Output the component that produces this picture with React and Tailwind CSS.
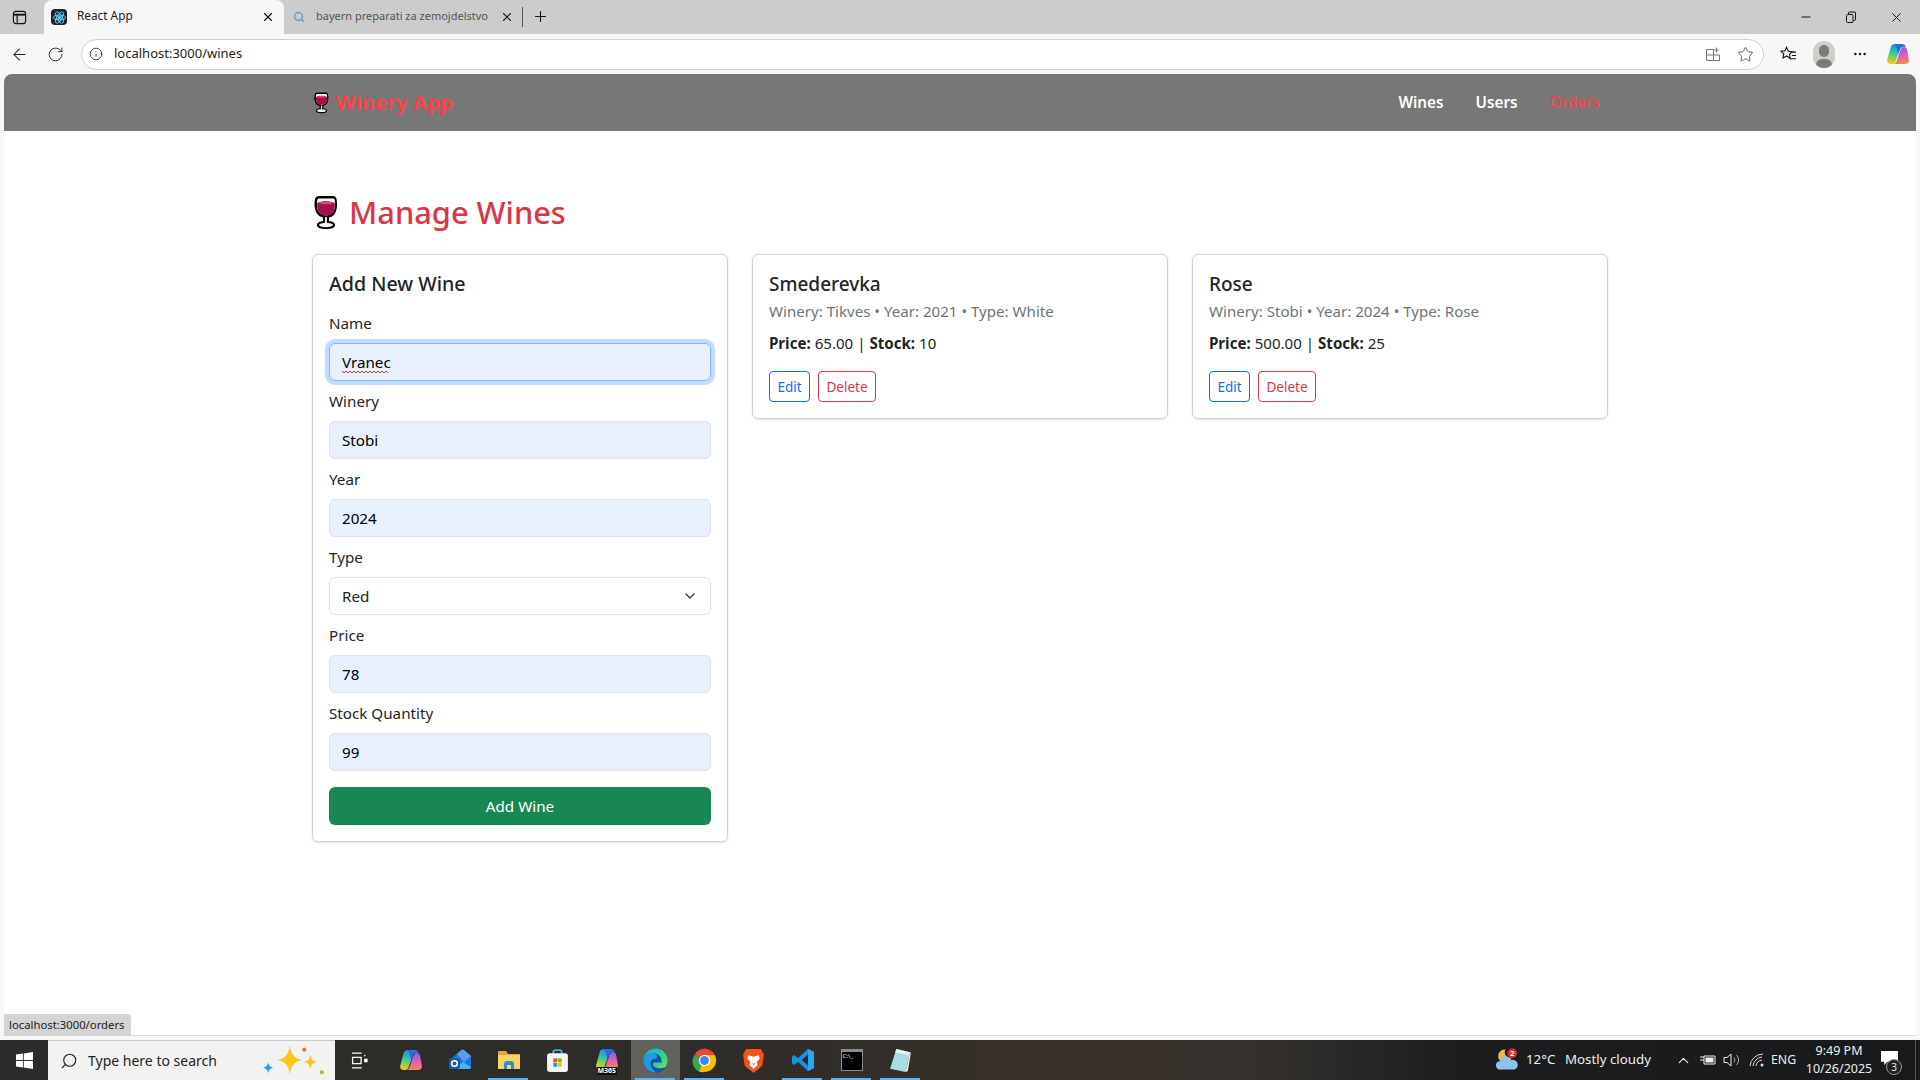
import React from 'react';
import { ArrowLeft, RotateCw, Info, X, Plus, Minus, Star, Search, MoreHorizontal, ChevronUp, ChevronDown } from 'lucide-react';

const font = { fontFamily: '"Noto Sans", sans-serif' };

function WineGlass({ className }) {
  return (
    <svg viewBox="0 0 24 36" className={className}>
      <path d="M5 2h14c2 0 3 1 3.500 3 1.500 8 0 17-7.500 18.500V27c3 .3 6 1.500 6 4 0 3-4 4-9 4s-9-1-9-4c0-2.500 3-3.700 6-4v-3.500C1 22 -.5 13 1 5c.5-2 2-3 4-3z" fill="#000" />
      <path d="M5 4.500h14c1 0 1.500.5 1.700 1.500 1 7 .3 15-8.700 15.500C3 21 2.300 13 3.300 6c.2-1 .7-1.500 1.700-1.500z" fill="#fff" />
      <path d="M3.200 9c4-2.500 13.500-2.500 17.600 0 .5 6-1 12.500-8.800 12.500S2.700 15 3.200 9z" fill="#a60f4f" />
      <path d="M4 9c4-2 12-2 16 0-4 1.800-12 1.800-16 0z" fill="#e8406f" />
      <path d="M11 23h2v6h-2z" fill="#dcdcdc" />
      <ellipse cx="12" cy="31" rx="7" ry="2.200" fill="#f2f2f2" />
    </svg>
  );
}

function Field({ label, value, squiggle }) {
  return (
    <div className="mb-2">
      <label className="block mb-2 text-[15.200px] leading-6 text-[#212529]">{label}</label>
      <div className="relative">
        <input
          readOnly
          value={value}
          spellCheck={false}
          className={`block w-full h-[38px] px-3 rounded-md bg-[#e8f0fe] text-[15.200px] text-black outline-none border ${squiggle ? 'border-[#86b7fe] ring-4 ring-[#0d6efd]/25' : 'border-[#dee2e6]'}`}
        />
        {squiggle && (
          <svg className="absolute left-[13px] top-[27px] w-[48px] h-[4px]" viewBox="0 0 48 4">
            <path d="M0 1l2 2 2-2 2 2 2-2 2 2 2-2 2 2 2-2 2 2 2-2 2 2 2-2 2 2 2-2 2 2 2-2 2 2 2-2 2 2 2-2 2 2 2-2 2 2" fill="none" stroke="#e53935" strokeWidth="1" />
          </svg>
        )}
      </div>
    </div>
  );
}

function WineCard({ name, meta, price, stock }) {
  return (
    <div className="bg-white border border-[#d4d4d4] rounded-md shadow-sm p-4 self-start">
      <h5 className="text-[19px] leading-[26px] font-medium text-[#212529] mb-[2px]">{name}</h5>
      <p className="text-[15.100px] leading-6 text-[#6c757d] mb-2">{meta}</p>
      <p className="text-[15.100px] leading-6 text-[#212529] mb-4">
        <strong className="font-bold">Price:</strong> {price} | <strong className="font-bold">Stock:</strong> {stock}
      </p>
      <div className="flex gap-2">
        <button className="w-[41px] h-[31px] pt-px border border-[#0d6efd] rounded text-[13.500px] text-[#0d6efd]">Edit</button>
        <button className="w-[58px] h-[31px] pt-px border border-[#dc3545] rounded text-[13.500px] text-[#dc3545]">Delete</button>
      </div>
    </div>
  );
}

function TabBar() {
  return (
    <div className="h-[34px] bg-[#cccccc] flex items-center text-[12px] shrink-0">
      <div className="w-[44px] flex justify-center">
        <svg viewBox="0 0 16 16" className="w-[15px] h-[15px] ml-[-5px]" fill="none" stroke="#111" strokeWidth="1.200">
          <rect x="1.500" y="1.500" width="13" height="13" rx="2.500" />
          <path d="M1.500 5h13" strokeWidth="2" />
          <path d="M5.500 5v9.500" />
        </svg>
      </div>
      <div className="w-[240px] h-full bg-[#f7f7f7] rounded-t-lg flex items-center pl-[7px] pr-[9px]">
        <div className="w-[16px] h-[16px] rounded-sm bg-[#20232a] flex items-center justify-center">
          <svg viewBox="0 0 24 24" className="w-[15px] h-[15px]" fill="none" stroke="#61dafb" strokeWidth="1.500">
            <circle cx="12" cy="12" r="2" fill="#61dafb" />
            <ellipse cx="12" cy="12" rx="10" ry="4" />
            <ellipse cx="12" cy="12" rx="10" ry="4" transform="rotate(60 12 12)" />
            <ellipse cx="12" cy="12" rx="10" ry="4" transform="rotate(120 12 12)" />
          </svg>
        </div>
        <span className="ml-[10px] text-[#222] text-[11.800px] -mt-[2px]">React App</span>
        <X className="ml-auto w-[14px] h-[14px] text-[#111]" />
      </div>
      <div className="w-[238px] h-full flex items-center pl-[9px] pr-[8px]">
        <Search className="w-[12px] h-[12px] text-[#6d9bc4]" strokeWidth={3} />
        <span className="ml-[11px] w-[180px] whitespace-nowrap text-[#555] text-[11px] -mt-px">bayern preparati za zemojdelstvo</span>
        <X className="ml-auto w-[14px] h-[14px] text-[#222]" />
      </div>
      <div className="w-px h-[20px] bg-[#555]" />
      <Plus className="ml-[9px] w-[17px] h-[17px] text-[#111] -mt-[2px]" strokeWidth={1.500} />
      <div className="ml-auto flex items-center h-full mr-[1px]">
        <div className="w-[45px] flex justify-center"><Minus className="w-[14px] h-[14px] text-[#111]" /></div>
        <div className="w-[45px] flex justify-center">
          <svg viewBox="0 0 12 12" className="w-[12px] h-[12px]" fill="none" stroke="#111">
            <rect x="1.500" y="3.500" width="6.500" height="8" rx="1" />
            <path d="M3.500 3V2a1 1 0 0 1 1-1h5a1 1 0 0 1 1 1v6.500a1 1 0 0 1-1 1H8.500" />
          </svg>
        </div>
        <div className="w-[46px] flex justify-center"><X className="w-[15px] h-[15px] text-[#111]" strokeWidth={1.500} /></div>
      </div>
    </div>
  );
}

function Toolbar() {
  return (
    <div className="h-[40px] bg-[#f7f7f7] flex items-center shrink-0">
      <div className="w-[38px] flex justify-center"><ArrowLeft className="w-[19px] h-[19px] text-[#222]" strokeWidth={1.300} /></div>
      <div className="w-[35px] flex justify-center"><RotateCw className="w-[17px] h-[17px] text-[#222]" strokeWidth={1.300} /></div>
      <div className="ml-[8px] w-[1683px] h-[31px] bg-white border border-[#cfcfcf] rounded-full flex items-center pl-[8px] pr-[9px]">
        <Info className="w-[14px] h-[14px] text-[#333] -ml-px" strokeWidth={1.500} />
        <span className="ml-[11px] text-[13px] text-[#222]">localhost:3000/wines</span>
        <svg viewBox="0 0 16 16" className="ml-auto w-[16px] h-[16px]" fill="none" stroke="#777">
          <path d="M1.500 3.500h7v11h-7zM1.500 9h13v5.500h-6M11.500 1.500v5M9 4h5" />
        </svg>
        <Star className="ml-[16px] w-[17px] h-[17px] text-[#444]" strokeWidth={1.200} />
      </div>
      <svg viewBox="0 0 18 18" className="ml-[16px] w-[17px] h-[17px]" fill="none" stroke="#111" strokeWidth="1.200">
        <path d="M7 1.500l1.800 4 4.200.5-3 2.900.8 4.300L7 10.600l-3.800 2.100.8-4.300-3-2.900 4.200-.5zM12 6.500h5M12.500 10h4.500M11.500 13.500h5.500" />
      </svg>
      <div className="ml-[16px] w-[22px] h-[27px] rounded-full bg-[#cfcdc9] relative overflow-hidden">
        <div className="absolute left-[6px] top-[4px] w-[10px] h-[12px] rounded-full bg-[#7d7b78]" />
        <div className="absolute left-[3px] top-[18px] w-[16px] h-[12px] rounded-full bg-[#7d7b78]" />
      </div>
      <MoreHorizontal className="ml-[17px] w-[16px] h-[16px] text-[#222]" />
      <Copilot className="ml-[18px] w-[24px] h-[24px]" label="b" />
    </div>
  );
}

function Copilot({ className, label }) {
  return (
    <svg viewBox="0 0 24 24" className={className}>
      <defs>
        <linearGradient id={`cpa${label}`} x1="0.500" y1="0" x2="0.300" y2="1">
          <stop offset="0" stopColor="#1f8fe8" />
          <stop offset="0.450" stopColor="#38c6a0" />
          <stop offset="0.750" stopColor="#9bd23c" />
          <stop offset="1" stopColor="#f7c52e" />
        </linearGradient>
        <linearGradient id={`cpb${label}`} x1="0.500" y1="0" x2="0.600" y2="1">
          <stop offset="0" stopColor="#8a5be8" />
          <stop offset="0.500" stopColor="#e35bc0" />
          <stop offset="1" stopColor="#f78a4a" />
        </linearGradient>
      </defs>
      <path d="M8 2h8l-3 8-3.500 9.500A3.500 3.500 0 0 1 6 22H4.500C2 22 .6 20 1.300 17.600L4.700 5A4 4 0 0 1 8 2z" fill={`url(#cpa${label})`} />
      <path d="M16 22H8c1.500-.8 2.400-2 3-4l3-9c.8-2.300 2-4 4-4 1.600 0 2.700 1 3.200 3l1.600 9.600C23.400 20 22 22 19.500 22z" fill={`url(#cpb${label})`} />
      <path d="M8 2h8c2 0 3.300 1.200 3.800 3-3.500-.7-5.300.5-6.300 3.500L12 12c-.5-4-1-7-4-10z" fill="#1f6fe0" />
    </svg>
  );
}

function Cell({ children, active, bar }) {
  return (
    <div className={`relative w-[49px] h-full flex items-center justify-center ${active ? 'bg-white/25' : ''}`}>
      {children}
      {bar && <div className="absolute left-[4px] right-[5px] bottom-0 h-[2px] bg-[#5fb2ee]" />}
    </div>
  );
}

function Taskbar() {
  return (
    <div className="h-10 flex items-center text-white shrink-0 bg-[linear-gradient(90deg,#2b2b29_0%,#2d2c28_35%,#39302a_58%,#33302c_66%,#1c1d1f_76%,#18191b_100%)]" style={font}>
      <div className="w-[48px] flex justify-center">
        <svg viewBox="0 0 16 16" className="w-[17px] h-[17px]" fill="#fff">
          <path d="M0 2.300l6.500-.9v6.200H0zM7.300 1.300L16 0v7.600H7.300zM0 8.400h6.500v6.200L0 13.700zM7.300 8.400H16V16l-8.700-1.300z" />
        </svg>
      </div>
      <div className="w-[287px] h-full bg-[#f2f2f2] border-t border-[#c9c9c9] flex items-center pl-[12px] text-[#222] relative">
        <Search className="w-[18px] h-[18px] -scale-x-100 text-[#222]" strokeWidth={1.500} />
        <span className="ml-[10px] text-[14px]">Type here to search</span>
        <svg viewBox="0 0 64 34" className="absolute right-[7px] top-[2px] w-[66px] h-[36px]">
          <path d="M27 2c1.200 9 4.500 12.500 12 14-7.500 1.500-10.800 5-12 14-1.200-9-4.500-12.500-12-14 7.500-1.500 10.800-5 12-14z" fill="#f9c320" />
          <path d="M47 11c.6 4.500 2.200 6 6 7-3.800 1-5.400 2.500-6 7-.6-4.500-2.200-6-6-7 3.800-1 5.400-2.500 6-7z" fill="#f9c320" />
          <path d="M6 18c.5 3.500 1.800 4.700 5 5.500-3.200.8-4.500 2-5 5.500-.5-3.500-1.800-4.700-5-5.500 3.200-.8 4.500-2 5-5.500z" fill="#2d9be8" />
          <circle cx="41" cy="6" r="2" fill="#f0703a" />
          <circle cx="58" cy="28" r="2" fill="#8fc642" />
        </svg>
      </div>
      <div className="flex h-full ml-[2px]">
        <Cell>
          <svg viewBox="0 0 16 16" className="w-[17px] h-[17px] -ml-[4px]" fill="none" stroke="#fff" strokeWidth="1.200">
            <path d="M1 1h9M1 15h9M1.500 5h8v6h-8z" />
            <path d="M13 2.500v1.500M13 7h2v2h-2z" fill="#fff" />
          </svg>
        </Cell>
        <Cell><Copilot className="w-[24px] h-[24px]" label="t" /></Cell>
        <Cell>
          <svg viewBox="0 0 24 24" className="w-[24px] h-[24px]">
            <path d="M4 10l9-8a2 2 0 0 1 2.500 0L23 8v11a2 2 0 0 1-2 2H6z" fill="#1a78d6" />
            <path d="M9 6l4.500-4a2 2 0 0 1 2.500 0l7 6-7 6z" fill="#5a9df0" />
            <path d="M6 21l9-7 8 5a2 2 0 0 1-2 2z" fill="#4fb3ef" />
            <rect x="1" y="10" width="11" height="11" rx="2" fill="#0f5cb0" />
            <circle cx="6.500" cy="15.500" r="2.800" fill="none" stroke="#fff" strokeWidth="1.600" />
          </svg>
        </Cell>
        <Cell bar>
          <svg viewBox="0 0 24 24" className="w-[24px] h-[24px]">
            <path d="M1 3h8l2 3h12v15H1z" fill="#e0a93a" />
            <path d="M1 7h22v14H1z" fill="#f7d564" />
            <path d="M7 21v-5a3 3 0 0 1 3-3h4a3 3 0 0 1 3 3v5h-3v-4h-4v4z" fill="#2f8fd8" />
          </svg>
        </Cell>
        <Cell>
          <svg viewBox="0 0 24 24" className="w-[25px] h-[25px]">
            <path d="M8 7V4a2 2 0 0 1 2-2h4a2 2 0 0 1 2 2v3" fill="none" stroke="#39b2e8" strokeWidth="1.800" />
            <rect x="2" y="5" width="20" height="18" rx="2.500" fill="#f5f5f5" />
            <path d="M8 10h3.700v3.700H8z" fill="#f25022" />
            <path d="M12.300 10H16v3.700h-3.700z" fill="#7fba00" />
            <path d="M8 14.300h3.700V18H8z" fill="#00a4ef" />
            <path d="M12.300 14.300H16V18h-3.700z" fill="#ffb900" />
          </svg>
        </Cell>
        <Cell>
          <div className="relative w-[24px] h-[26px]">
            <Copilot className="w-[24px] h-[24px]" label="m" />
            <span className="absolute left-[2px] bottom-[-2px] bg-[#111] text-[7px] leading-[8px] px-px font-bold">M365</span>
          </div>
        </Cell>
        <Cell active bar>
          <svg viewBox="0 0 24 24" className="w-[25px] h-[25px]">
            <defs>
              <linearGradient id="edgeA" x1="0" y1="0" x2="1" y2="0.800">
                <stop offset="0" stopColor="#1fa4dc" />
                <stop offset="0.600" stopColor="#2fcf9a" />
                <stop offset="1" stopColor="#79dc5a" />
              </linearGradient>
            </defs>
            <circle cx="12" cy="12" r="11.500" fill="url(#edgeA)" />
            <path d="M1 13c0-6 5-8 9-8 5 0 8 3.500 8 9h-6.500c-2 0-2.500 2-1 3.500 3 2.500 8 2.500 12 .5-2 3.500-6 6-10.500 6C6 24 1 19 1 13z" fill="#0f56ab" />
            <path d="M1 13c-.3-6 5-9 9.500-8 2.800.6 4 3 2 5.500-3.500-.5-6 1.500-5 6 .6 2.500 2.500 5 5.500 7C6 24 1.300 19 1 13z" fill="#1e9be4" />
          </svg>
        </Cell>
        <Cell bar>
          <svg viewBox="0 0 24 24" className="w-[25px] h-[25px]">
            <path d="M12 12L2.500 6.500A11 11 0 0 1 22 7z" fill="#e8453c" />
            <path d="M12 12l-5 10.800A11 11 0 0 1 2.500 6.500z" fill="#34a853" />
            <path d="M12 7h10a11 11 0 0 1-10 16 11 11 0 0 1-5-.2z" fill="#fbbc05" />
            <circle cx="12" cy="12" r="5.500" fill="#fff" />
            <circle cx="12" cy="12" r="4.300" fill="#4285f4" />
          </svg>
        </Cell>
        <Cell>
          <svg viewBox="0 0 24 24" className="w-[25px] h-[25px]">
            <path d="M5 1h14l3 5-1.500 11L12 24l-8.500-7L2 6z" fill="#f4511e" />
            <path d="M7 7l5 1.500L17 7l1 3-3 3.500 1 3-4 3.500-4-3.500 1-3L6 10z" fill="#fff" />
            <path d="M10.500 14l1.500 1 1.500-1-1.500 3z" fill="#f4511e" />
          </svg>
        </Cell>
        <Cell bar>
          <svg viewBox="0 0 24 24" className="w-[24px] h-[24px]">
            <path d="M17 1l6 3v16l-6 3L7 14l-4 3-2-1.500V8.500L3 7l4 3z" fill="#1c8fdf" />
            <path d="M17 6.500L11 12l6 5.500z" fill="#24292e" />
            <path d="M17 1l6 3v16l-6 3z" fill="#2aa7f0" />
          </svg>
        </Cell>
        <Cell bar>
          <div className="w-[22px] h-[22px] bg-black border border-[#8a8a8a] border-t-[3px] flex items-start pl-px text-[6px] leading-[9px] text-white">C:\_</div>
        </Cell>
        <Cell bar>
          <svg viewBox="0 0 24 24" className="w-[25px] h-[25px]">
            <path d="M8 1l13 3-4 19-15-3z" fill="#a8dde4" />
            <path d="M8 1l13 3-1 3L7 4z" fill="#e6f2f4" />
            <path d="M17 23l4-19 1 .5L19 22z" fill="#f2f2f2" />
          </svg>
        </Cell>
      </div>
      <div className="ml-auto flex items-center h-full text-[#eee]">
        <svg viewBox="0 0 26 24" className="w-[25px] h-[24px] mr-[6px]">
          <path d="M11 1a7 7 0 1 0 6 9A6 6 0 0 1 11 1z" fill="#f5b93a" />
          <path d="M6 22a4.500 4.500 0 0 1-1-9 6.500 6.500 0 0 1 12-1 5 5 0 0 1 3 10z" fill="#8fc1ec" />
          <circle cx="18" cy="5" r="5" fill="#d32f2f" />
          <text x="18" y="8" textAnchor="middle" fontSize="8" fill="#fff" fontWeight="700">2</text>
        </svg>
        <span className="text-[13.300px] w-[39px]">12°C</span>
        <span className="text-[13.300px] w-[110px]">Mostly cloudy</span>
        <ChevronUp className="w-[17px] h-[17px]" strokeWidth={1.500} />
        <svg viewBox="0 0 18 12" className="ml-[7px] w-[18px] h-[12px]">
          <path d="M5 2h11v8H5z" fill="none" stroke="#eee" />
          <path d="M6.500 3.500h8v5h-8z" fill="#eee" />
          <path d="M1 3h4M1 6h4" stroke="#eee" />
        </svg>
        <svg viewBox="0 0 18 16" className="ml-[6px] w-[18px] h-[16px]" fill="none" stroke="#eee">
          <path d="M1 5.500h3L8 2v12l-4-3.500H1z" />
          <path d="M11 5.500a4 4 0 0 1 0 5M13.500 3a7 7 0 0 1 0 10" stroke="#aaa" />
        </svg>
        <svg viewBox="0 0 16 16" className="ml-[8px] w-[16px] h-[16px]" fill="none" stroke="#ddd">
          <path d="M1 14a13 13 0 0 1 13-12M4 14a10 10 0 0 1 9-9M7 14a7 7 0 0 1 6-6" />
          <circle cx="13" cy="13" r="1.500" fill="#ddd" stroke="none" />
        </svg>
        <span className="ml-[6px] text-[12.300px] w-[25px]">ENG</span>
        <div className="ml-[5px] w-[76px] flex flex-col items-center text-[12.500px] leading-[18px]">
          <span>9:49 PM</span>
          <span>10/26/2025</span>
        </div>
        <div className="relative w-[38px] h-full flex items-center justify-center">
          <svg viewBox="0 0 16 14" className="w-[17px] h-[15px] -mt-[4px] -ml-[14px]" fill="#fff">
            <path d="M0 0h16v10H6l-3 3v-3H0z" />
          </svg>
          <div className="absolute left-[9px] top-[19px] w-[16px] h-[16px] rounded-full border border-[#999] bg-[#222] text-[10px] leading-[14px] text-center">3</div>
        </div>
        <div className="w-px h-full bg-[#555] mr-[4px]" />
      </div>
    </div>
  );
}

export default function App() {
  return (
    <div className="h-screen flex flex-col overflow-hidden bg-white" style={font}>
      <TabBar />
      <Toolbar />
      <div className="relative flex-1 bg-[#f7f7f7] px-[4px]">
        <div className="h-[calc(100%-4px)] bg-white rounded-t-lg border-b border-[#dcdcdc] overflow-hidden">
          <nav className="h-[57px] bg-[#777777] flex items-center justify-center">
            <div className="w-[1296px] flex items-center">
              <WineGlass className="ml-[2px] w-[15px] h-[23px]" />
              <span className="ml-[7px] text-[20.400px] font-bold text-[#ff414a]">Winery App</span>
              <div className="ml-auto flex gap-[32px] text-[15.300px] mr-[8px]">
                <span className="font-semibold text-white">Wines</span>
                <span className="font-semibold text-white">Users</span>
                <span className="font-medium text-[#ff414a]">Orders</span>
              </div>
            </div>
          </nav>
          <main className="w-[1296px] mx-auto pt-[62px]">
            <h1 className="flex items-center text-[30.800px] leading-[38px] font-medium text-[#dc3545] mb-[23px]">
              <WineGlass className="ml-[2px] w-[24px] h-[36px]" />
              <span className="ml-[11px]">Manage Wines</span>
            </h1>
            <div className="grid grid-cols-3 gap-6 items-start">
              <div className="bg-white border border-[#d4d4d4] rounded-md shadow-sm p-4">
                <h5 className="text-[19.600px] leading-[26px] font-medium text-[#212529] mb-[14px]">Add New Wine</h5>
                <Field label="Name" value="Vranec" squiggle />
                <Field label="Winery" value="Stobi" />
                <Field label="Year" value="2024" />
                <div className="mb-2">
                  <label className="block mb-2 text-[15.200px] leading-6 text-[#212529]">Type</label>
                  <div className="h-[38px] px-3 rounded-md border border-[#dee2e6] bg-white flex items-center justify-between text-[15.200px] text-[#212529]">
                    <span className="pt-px">Red</span>
                    <ChevronDown className="w-[16px] h-[16px] text-[#343a40]" />
                  </div>
                </div>
                <Field label="Price" value="78" />
                <Field label="Stock Quantity" value="99" />
                <button className="mt-4 block w-full h-[38px] pt-px rounded-md bg-[#198754] text-white text-[15.200px]">Add Wine</button>
              </div>
              <WineCard name="Smederevka" meta="Winery: Tikves • Year: 2021 • Type: White" price="65.00" stock="10" />
              <WineCard name="Rose" meta="Winery: Stobi • Year: 2024 • Type: Rose" price="500.00" stock="25" />
            </div>
          </main>
        </div>
        <div className="absolute left-[4px] bottom-[4px] h-[22px] w-[127px] bg-[#d4d4d4] rounded-tr flex items-center pl-[5px] text-[11.300px] text-[#222]">
          localhost:3000/orders
        </div>
      </div>
      <Taskbar />
    </div>
  );
}
